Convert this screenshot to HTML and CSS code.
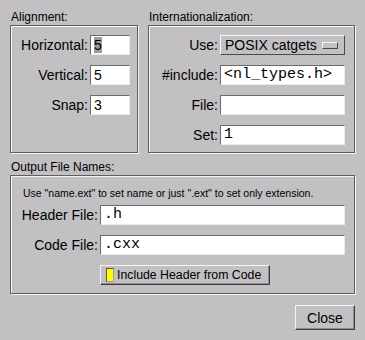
FILE: index.html
```html
<!DOCTYPE html>
<html>
<head>
<meta charset="utf-8">
<link rel="stylesheet" href="styles.css">
</head>
<body>
<div class="dialog">
  <div class="top">
    <section class="group align">
      <div class="group-label">Alignment:</div>
      <div class="box">
        <div class="row"><span class="lbl">Horizontal:</span><div class="input"><span class="sel">5</span></div></div>
        <div class="row"><span class="lbl">Vertical:</span><div class="input">5</div></div>
        <div class="row"><span class="lbl">Snap:</span><div class="input">3</div></div>
      </div>
    </section>
    <section class="group i18n">
      <div class="group-label">Internationalization:</div>
      <div class="box">
        <div class="row"><span class="lbl">Use:</span><div class="choice"><span>POSIX catgets</span><span class="choice-ind"></span></div></div>
        <div class="row"><span class="lbl">#include:</span><div class="input mono">&lt;nl_types.h&gt;</div></div>
        <div class="row"><span class="lbl">File:</span><div class="input mono"></div></div>
        <div class="row"><span class="lbl">Set:</span><div class="input mono">1</div></div>
      </div>
    </section>
  </div>
  <section class="group output">
    <div class="group-label">Output File Names:</div>
    <div class="box">
      <div class="hint">Use "name.ext" to set name or just ".ext" to set only extension.</div>
      <div class="row"><span class="lbl">Header File:</span><div class="input mono">.h</div></div>
      <div class="row"><span class="lbl">Code File:</span><div class="input mono">.cxx</div></div>
      <div class="row btn-row"><button class="btn light-btn"><span class="light"></span><span>Include Header from Code</span></button></div>
    </div>
  </section>
  <div class="actions"><button class="btn close">Close</button></div>
</div>
</body>
</html>
```
FILE: styles.css
```css
html, body {
  margin: 0;
  background: #c2c0c3;
}
body {
  font-family: "Liberation Sans", Arial, sans-serif;
  color: #000;
}
.dialog {
  width: 365px;
  height: 340px;
  box-sizing: border-box;
  padding: 10px 10px 0 10px;
}
.top {
  display: flex;
  gap: 10px;
}
.group-label {
  font-size: 12px;
  line-height: 14px;
  height: 14px;
  padding-left: 1px;
  margin-bottom: 1px;
}
.box {
  box-sizing: border-box;
  border: 1px solid #5e5e5e;
  box-shadow: inset 1px 1px 0 #f4f4f4, 1px 1px 0 #f4f4f4;
}
.align { width: 128px; }
.align .box {
  height: 128px;
  padding: 9px 7px 0 0;
}
.i18n { width: 207px; }
.i18n .box {
  height: 128px;
  padding: 9px 9px 0 0;
}
.row {
  display: flex;
  align-items: center;
  justify-content: flex-end;
  height: 20px;
  margin-bottom: 10px;
  font-size: 14px;
}
.lbl {
  margin-right: 2px;
  white-space: nowrap;
}
.input {
  box-sizing: border-box;
  height: 20px;
  background: #fff;
  border-top: 1px solid #6a6a6a;
  border-left: 1px solid #6a6a6a;
  border-right: 1px solid #ececec;
  border-bottom: 1px solid #ececec;
  padding-left: 3px;
  font-size: 14px;
  line-height: 18px;
  white-space: nowrap;
  overflow: hidden;
}
.align .input { width: 40px; }
.i18n .input, .i18n .choice { width: 125px; }
.mono {
  font-family: "Liberation Mono", "Courier New", monospace;
  font-size: 15px;
}
.sel {
  background: #9d9b9e;
}
.choice {
  box-sizing: border-box;
  height: 20px;
  display: flex;
  align-items: center;
  padding-left: 4px;
  border-top: 1px solid #f4f4f4;
  border-left: 1px solid #f4f4f4;
  border-right: 1px solid #4a4a4a;
  border-bottom: 1px solid #4a4a4a;
  font-size: 14px;
  white-space: nowrap;
}
.choice-ind {
  margin-left: auto;
  margin-right: 6px;
  width: 14px;
  height: 5px;
  border-top: 1px solid #f4f4f4;
  border-left: 1px solid #f4f4f4;
  border-right: 1px solid #4a4a4a;
  border-bottom: 1px solid #4a4a4a;
}
.output { margin-top: 7px; }
.output .box {
  height: 119px;
  padding: 11px 9px 0 0;
}
.output .input { width: 245px; }
.hint {
  font-size: 10.5px;
  line-height: 13px;
  padding-left: 12px;
  margin-bottom: 5px;
  white-space: nowrap;
}
.btn-row {
  justify-content: flex-start;
  padding-left: 89px;
}
.btn {
  box-sizing: border-box;
  margin: 0;
  background: #c2c0c3;
  border-top: 1px solid #f4f4f4;
  border-left: 1px solid #f4f4f4;
  border-right: 1px solid #3c3c3c;
  border-bottom: 1px solid #3c3c3c;
  box-shadow: inset -1px -1px 0 #8e8c8f;
  font-family: "Liberation Sans", Arial, sans-serif;
  color: #000;
  padding: 0;
}
.light-btn {
  width: 170px;
  height: 20px;
  display: flex;
  align-items: center;
  font-size: 12.3px;
  white-space: nowrap;
}
.light {
  box-sizing: border-box;
  width: 8px;
  height: 14px;
  margin-left: 5px;
  margin-right: 3px;
  background: #ffff00;
  border-top: 1px solid #555;
  border-left: 1px solid #555;
  border-right: 1px solid #9a9a9a;
  border-bottom: 1px solid #9a9a9a;
}
.actions {
  display: flex;
  justify-content: flex-end;
  margin-top: 11px;
}
.close {
  width: 60px;
  height: 25px;
  font-size: 14px;
}
```
